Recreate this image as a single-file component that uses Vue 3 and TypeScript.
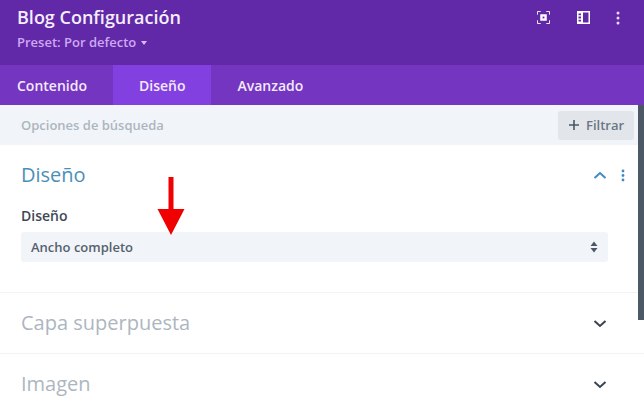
<script setup lang="ts">
const tabs = [
  { label: 'Contenido', active: false },
  { label: 'Diseño', active: true },
  { label: 'Avanzado', active: false },
]

const collapsed = ['Capa superpuesta', 'Imagen']
</script>

<template>
  <div class="panel">
    <header class="head">
      <div class="head__text">
        <h1 class="head__title">Blog Configuración</h1>
        <div class="head__preset">Preset: Por defecto <span class="head__caret"></span></div>
      </div>
      <div class="head__icons">
        <svg class="head__icon-focus" width="13" height="13" viewBox="0 0 14 14" fill="none" stroke="#fff" stroke-width="1">
          <path d="M.5 4V.5H4M10 .5h3.500V4M13.500 10v3.500H10M4 13.500H.5V10" />
          <rect x="3.500" y="3.500" width="7" height="7" fill="#fff" stroke="none" />
          <rect x="6" y="6" width="2" height="2" fill="#6128a8" stroke="none" />
        </svg>
        <svg width="13" height="13" viewBox="0 0 13 13">
          <path fill="#fff" fill-rule="evenodd" d="M0 0h13v13H0zM6 1.500v10h5.500v-10zM1.500 2.500v1.800H4V2.500zM1.500 5.600v1.800H4V5.600zM1.500 8.700v1.800H4V8.700z" />
        </svg>
        <svg width="4" height="14" viewBox="0 0 4 14" fill="#ead9fb">
          <circle cx="2" cy="2" r="1.500" />
          <circle cx="2" cy="7" r="1.500" />
          <circle cx="2" cy="12" r="1.500" />
        </svg>
      </div>
    </header>

    <nav class="tabs">
      <div
        v-for="tab in tabs"
        :key="tab.label"
        class="tabs__item"
        :class="{ 'tabs__item--active': tab.active }"
      >
        {{ tab.label }}
      </div>
    </nav>

    <div class="search">
      <span class="search__hint">Opciones de búsqueda</span>
      <div class="search__btn">
        <svg width="10" height="10" viewBox="0 0 10 10" fill="#4c5866">
          <path d="M4.200 0h1.600v4.200H10v1.600H5.800V10H4.200V5.800H0V4.200h4.200z" />
        </svg>
        Filtrar
      </div>
    </div>

    <section class="group group--open">
      <div class="group__head">
        <h2 class="group__title group__title--open">Diseño</h2>
        <div class="group__actions">
          <svg width="14" height="8" viewBox="0 0 14 8" fill="none" stroke="#3f8cc4" stroke-width="2">
            <path d="M1.500 7 7 2l5.500 5" />
          </svg>
          <svg width="4" height="13" viewBox="0 0 4 13" fill="#3f8cc4">
            <circle cx="2" cy="2" r="1.400" />
            <circle cx="2" cy="6.500" r="1.400" />
            <circle cx="2" cy="11" r="1.400" />
          </svg>
        </div>
      </div>
      <label class="field__label">Diseño</label>
      <div class="field__select">
        Ancho completo
        <svg width="8" height="12" viewBox="0 0 8 12" fill="#4c5866">
          <path d="M4 0.500 7.500 5h-7zM4 11.500.5 7h7z" />
        </svg>
      </div>
    </section>

    <section v-for="name in collapsed" :key="name" class="group group--closed">
      <h2 class="group__title">{{ name }}</h2>
      <svg class="group__chevron" width="14" height="8" viewBox="0 0 14 8" fill="none" stroke="#3a4450" stroke-width="2">
        <path d="M1.500 1 7 6l5.500-5" />
      </svg>
    </section>

    <div class="scrollbar"></div>

    <svg class="arrow" width="28" height="60" viewBox="0 0 28 60" fill="#f00000">
      <path d="M11.500 0h5v32h11L14 58 .5 32h11z" />
    </svg>
  </div>
</template>

<style scoped>
.panel {
  position: relative;
  width: 644px;
  height: 409px;
  overflow: hidden;
  background: #fff;
  font-family: "Open Sans", "Noto Sans", sans-serif;
}

.head {
  display: flex;
  justify-content: space-between;
  height: 65px;
  box-sizing: border-box;
  padding: 6px 24px 0 17px;
  background: #6128a8;
}

.head__title {
  margin: 0;
  font-size: 18px;
  line-height: 22px;
  font-weight: 600;
  color: #f5eefc;
}

.head__preset {
  margin-top: 5px;
  font-size: 13px;
  line-height: 18px;
  font-weight: 600;
  color: #cfa9f2;
}

.head__caret {
  display: inline-block;
  margin-left: 1px;
  vertical-align: 2px;
  border-left: 3px solid transparent;
  border-right: 3px solid transparent;
  border-top: 4px solid #d8bdf5;
}

.head__icons {
  display: flex;
  align-items: flex-start;
  gap: 26px;
  padding-top: 5px;
}

.head__icon-focus {
  margin-right: 1px;
}

.tabs {
  display: flex;
  height: 40px;
  background: #7435c0;
}

.tabs__item {
  display: flex;
  align-items: center;
  padding: 0 26px;
  font-size: 14px;
  font-weight: 600;
  color: #f3eafc;
}

.tabs__item:first-child {
  padding: 0 26px 0 17px;
}

.tabs__item--active {
  background: #8340e0;
}

.search {
  display: flex;
  align-items: center;
  justify-content: space-between;
  height: 40px;
  box-sizing: border-box;
  padding: 0 10px 0 21px;
  background: #f1f5f9;
}

.search__hint {
  font-size: 13px;
  font-weight: 600;
  color: #adb6c0;
}

.search__btn {
  display: flex;
  align-items: center;
  gap: 7px;
  width: 76px;
  height: 29px;
  box-sizing: border-box;
  padding-left: 11px;
  border-radius: 3px;
  background: #e2e6ea;
  font-size: 13px;
  font-weight: 600;
  color: #6b7684;
}

.group {
  box-sizing: border-box;
  padding: 0 36px 0 21px;
  border-bottom: 1px solid #f1f3f5;
}

.group--open {
  height: 148px;
}

.group--closed {
  display: flex;
  align-items: center;
  justify-content: space-between;
  height: 61px;
}

.group__head {
  display: flex;
  align-items: center;
  justify-content: space-between;
  padding-top: 15px;
  height: 30px;
  margin-right: -17px;
}

.group__title {
  margin: 0;
  font-size: 20px;
  line-height: 28px;
  font-weight: 400;
  color: #adb6c0;
}

.group__title--open {
  color: #4b8fb8;
}

.group__actions {
  display: flex;
  align-items: center;
  gap: 14px;
}

.group__chevron {
  margin: 2px 1px 0 0;
}

.field__label {
  display: block;
  margin-top: 16px;
  font-size: 14px;
  line-height: 20px;
  font-weight: 600;
  color: #3f4955;
}

.field__select {
  display: flex;
  align-items: center;
  justify-content: space-between;
  height: 30px;
  margin-top: 6px;
  box-sizing: border-box;
  padding: 0 10px;
  border-radius: 3px;
  background: #f1f5f9;
  font-size: 13px;
  font-weight: 600;
  color: #56616e;
}

.scrollbar {
  position: absolute;
  top: 105px;
  right: 0;
  width: 6px;
  height: 215px;
  background: #4c5866;
}

.arrow {
  position: absolute;
  left: 157px;
  top: 177px;
}
</style>
